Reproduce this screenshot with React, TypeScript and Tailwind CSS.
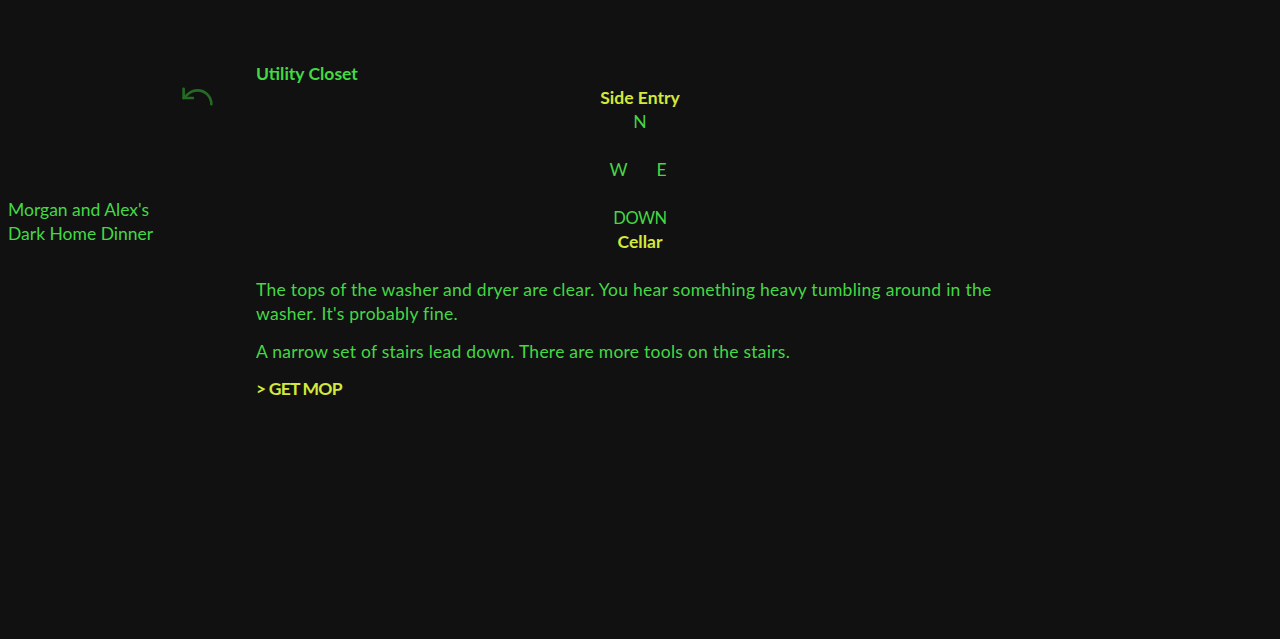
import React from "react";
import { Undo } from "lucide-react";

export default function App() {
  const font = { fontFamily: "Lato, 'Noto Sans', sans-serif" };
  return (
    <div className="flex h-[639px] w-full bg-[#111111] text-[17.5px] leading-[24px] text-[#44d844]" style={font}>
      <div className="flex w-[256px] shrink-0 flex-col">
        <div className="pl-[179px] pt-[78px] text-[#256b25]">
          <Undo size={37} strokeWidth={1.7} />
        </div>
        <div className="mt-[83px] pl-2">
          <div>Morgan and Alex's</div>
          <div>Dark Home Dinner</div>
        </div>
      </div>
      <div className="w-[768px] pt-[62px]">
        <div className="font-bold">Utility Closet</div>
        <div className="flex flex-col items-center">
          <div className="font-bold text-[#d4e83c]">Side Entry</div>
          <div>N</div>
          <div className="h-6" />
          <div className="flex gap-[29px] pr-[4px]">
            <span>W</span>
            <span>E</span>
          </div>
          <div className="h-6" />
          <div className="text-[16.5px] tracking-[-0.5px]">DOWN</div>
          <div className="font-bold text-[#d4e83c]">Cellar</div>
        </div>
        <p className="mt-6 tracking-[0.28px]">
          The tops of the washer and dryer are clear. You hear something heavy tumbling around in the washer. It's probably fine.
        </p>
        <p className="mt-[14px] tracking-[0.25px]">A narrow set of stairs lead down. There are more tools on the stairs.</p>
        <div className="mt-[13px] font-bold tracking-[-0.8px] text-[#d4e83c]">&gt; GET MOP</div>
      </div>
    </div>
  );
}
